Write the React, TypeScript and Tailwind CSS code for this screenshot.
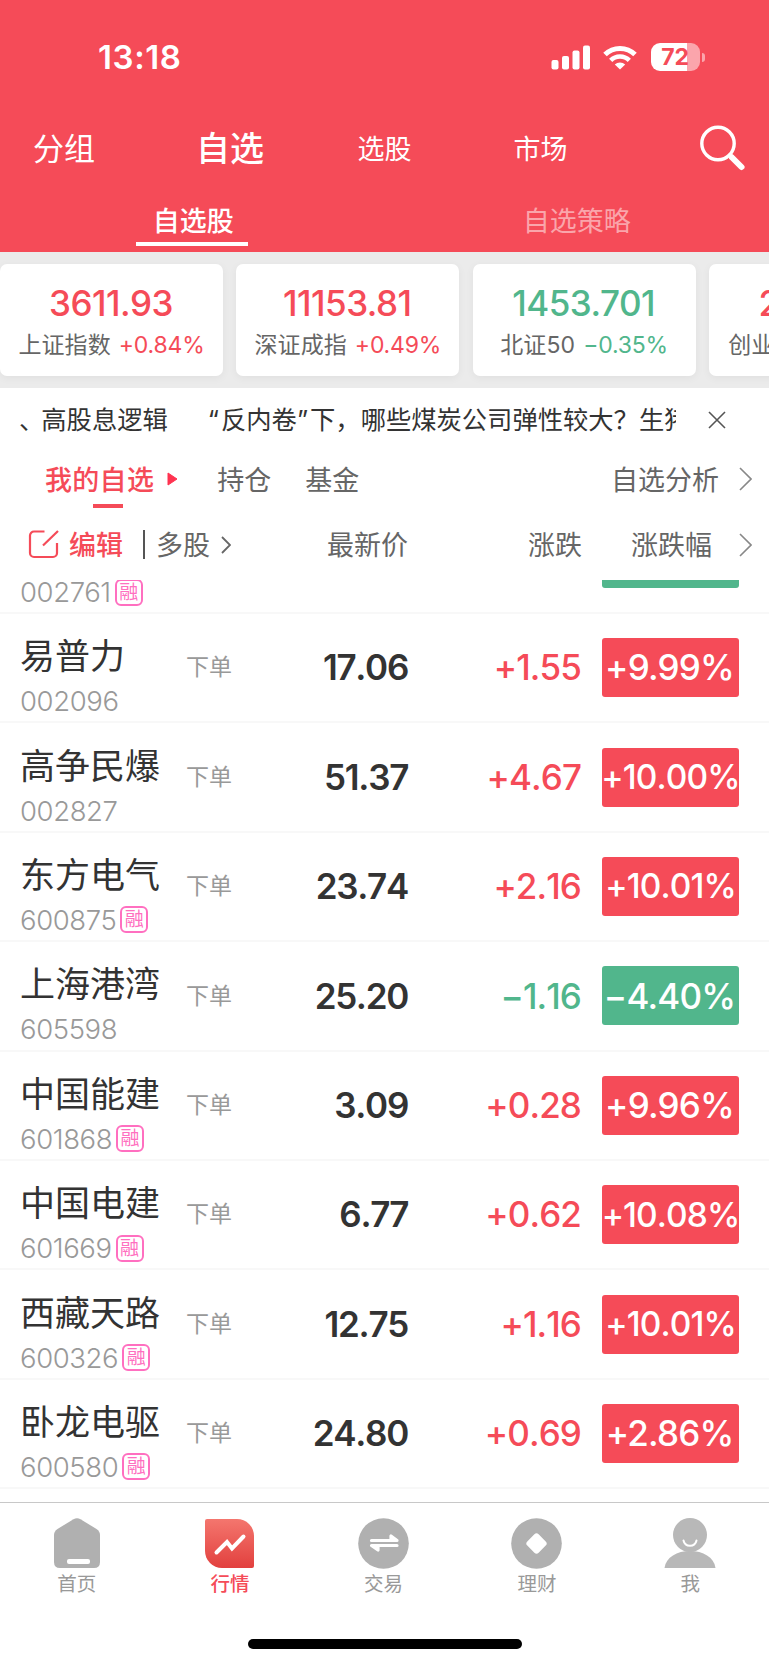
import type { ReactNode } from "react";
import clsx from "clsx";

type Quote = {
  name: string;
  code: string;
  margin?: boolean;
  price: string;
  change: string;
  percent: string;
};

type IndexQuote = {
  value: string;
  name: string;
  percent: string;
  up: boolean;
};

const INDEXES: IndexQuote[] = [
  { value: "3611.93", name: "上证指数", percent: "+0.84%", up: true },
  { value: "11153.81", name: "深证成指", percent: "+0.49%", up: true },
  { value: "1453.701", name: "北证50", percent: "−0.35%", up: false },
  { value: "2181.63", name: "创业板指", percent: "+0.87%", up: true },
];

const QUOTES: Quote[] = [
  { name: "易普力", code: "002096", price: "17.06", change: "+1.55", percent: "+9.99%" },
  { name: "高争民爆", code: "002827", price: "51.37", change: "+4.67", percent: "+10.00%" },
  { name: "东方电气", code: "600875", margin: true, price: "23.74", change: "+2.16", percent: "+10.01%" },
  { name: "上海港湾", code: "605598", price: "25.20", change: "−1.16", percent: "−4.40%" },
  { name: "中国能建", code: "601868", margin: true, price: "3.09", change: "+0.28", percent: "+9.96%" },
  { name: "中国电建", code: "601669", margin: true, price: "6.77", change: "+0.62", percent: "+10.08%" },
  { name: "西藏天路", code: "600326", margin: true, price: "12.75", change: "+1.16", percent: "+10.01%" },
  { name: "卧龙电驱", code: "600580", margin: true, price: "24.80", change: "+0.69", percent: "+2.86%" },
];

function StatusBar() {
  return (
    <div className="flex h-[114px] items-center pr-[64px] pl-[98px]">
      <span className="pt-[2px] text-[33px] font-semibold tracking-[0.6px]">13:18</span>
      <svg className="ml-auto" width="39" height="26" viewBox="0 0 39 26" fill="currentColor">
        <rect x="0.5" y="16" width="7" height="9.5" rx="2" />
        <rect x="11" y="12" width="7" height="13.5" rx="2" />
        <rect x="21.5" y="6.5" width="7" height="19" rx="2" />
        <rect x="32" y="1.5" width="7" height="24" rx="2" />
      </svg>
      <svg className="ml-[13px]" width="34" height="26" viewBox="0 0 34 26" fill="none" stroke="currentColor">
        <path d="M2 10.6a21.3 21.3 0 0 1 30 0" strokeWidth="5" />
        <path d="M7.7 16.3a13.2 13.2 0 0 1 18.6 0" strokeWidth="4.6" />
        <path d="M11.8 20.6a7.6 7.6 0 0 1 10.4 0L17 25.6z" fill="currentColor" stroke="none" />
      </svg>
      <div className="ml-[14px] flex h-[28px] w-[49px] overflow-hidden rounded-[9px] bg-[linear-gradient(to_right,#fff_36px,#fba5ac_36px)]">
        <span className="w-full pr-[1px] text-center text-[23px] leading-[28px] font-bold tracking-[-0.2px] text-[#f54b58]">72</span>
      </div>
      <span className="ml-[2px] h-[9px] w-[3px] rounded-r-full bg-[#fba5ac]" />
    </div>
  );
}

function Header() {
  return (
    <header className="h-[252px] bg-[#f54b58] text-white">
      <StatusBar />
      <div className="flex h-[68px] items-center whitespace-nowrap">
        <span className="w-[128px] pt-[3px] text-center text-[31px]">分组</span>
        <span className="w-[205px] pt-[1px] pr-[1px] text-center text-[34px] font-medium">自选</span>
        <span className="w-[104px] pt-[4px] pr-[1px] text-center text-[27px]">选股</span>
        <span className="w-[208px] pt-[4px] pr-[1px] text-center text-[27px]">市场</span>
        <svg className="mt-[-1px] ml-[53px]" width="50" height="50" viewBox="0 0 50 50" fill="none" stroke="currentColor" strokeLinecap="round">
          <circle cx="20" cy="20.500" r="16.2" strokeWidth="3.4" />
          <path d="M32 32l2.5 2.5" strokeWidth="4" />
          <path d="M34 34.500l9.500 9.500" strokeWidth="6" />
        </svg>
      </div>
      <div className="flex h-[70px] text-[27px]">
        <div className="flex flex-1 flex-col items-center">
          <span className="h-[60px] pl-[2px] leading-[80px] font-medium">自选股</span>
          <span className="h-[4px] w-[112px] bg-white" />
        </div>
        <div className="flex-1 text-center leading-[80px] text-[#faa5ab]">自选策略</div>
      </div>
    </header>
  );
}

function IndexStrip() {
  return (
    <section className="flex h-[136px] gap-[13.3px] overflow-hidden bg-[#ebebeb] pt-[12px]">
      {INDEXES.map((item) => (
        <div
          key={item.name}
          className={clsx(
            "flex h-[111.5px] w-[223px] shrink-0 flex-col items-center rounded-[7px] bg-white whitespace-nowrap shadow-[0_2px_8px_rgba(0,0,0,0.05)]",
            item.up ? "text-[#f54b58]" : "text-[#51b68c]",
          )}
        >
          <span className="mt-[18px] pr-[1px] text-[35px] leading-[42px] font-medium tracking-[-0.5px]">{item.value}</span>
          <span className="mt-[3px] flex gap-[8px] text-[23px] leading-[37px]">
            <span className="tracking-[0.1px] text-[#666]">{item.name}</span>
            <span className="tracking-[-0.2px]">{item.percent}</span>
          </span>
        </div>
      ))}
    </section>
  );
}

function NewsTicker() {
  return (
    <div className="flex h-[64px] items-center">
      <div className="ml-[16px] flex w-[660px] gap-[40px] overflow-hidden text-[25.3px] whitespace-nowrap text-[#333]">
        <span>
          <span className="mr-[-3px] ml-[3px]">、</span>高股息逻辑
        </span>
        <span>
          <span className="tracking-[2px]">“</span>反内卷<span className="tracking-[2px]">”</span>
          下，哪些煤炭公司弹性较大？生猪
        </span>
      </div>
      <svg className="ml-[32px]" width="18" height="18" viewBox="0 0 18 18" fill="none" stroke="#555" strokeWidth="1.6">
        <path d="M1 1l16 16M17 1L1 17" />
      </svg>
    </div>
  );
}

function Chevron() {
  return (
    <svg width="13" height="24" viewBox="0 0 13 24" fill="none" stroke="#888" strokeWidth="1.6">
      <path d="M1 1l11 11L1 23" />
    </svg>
  );
}

function GroupTabs() {
  return (
    <div className="flex h-[57px] items-start pr-[17px] pl-[45px] text-[27px] leading-[58px] whitespace-nowrap text-[#666]">
      <div className="flex flex-col items-center text-[#f54b58]">
        <span className="h-[52px] font-medium tracking-[0.3px]">我的自选</span>
        <span className="ml-[16px] h-[4px] w-[30px] bg-[#f54b58]" />
      </div>
      <svg className="mt-[20px] ml-[13px]" width="11" height="14" viewBox="0 0 11 14" fill="#ff3350">
        <path d="M1 1l9 6-9 6z" stroke="#ff3350" strokeLinejoin="round" />
      </svg>
      <span className="ml-[39px]">持仓</span>
      <span className="ml-[34px]">基金</span>
      <span className="ml-auto">自选分析</span>
      <span className="mt-[15px] ml-[20px] flex">
        <Chevron />
      </span>
    </div>
  );
}

function TableHead() {
  return (
    <div className="flex h-[71px] items-center pr-[17px] pl-[28px] text-[27px] whitespace-nowrap text-[#666]">
      <svg className="mt-[-2px]" width="31" height="30" viewBox="0 0 31 30" fill="none" stroke="#f54b58" strokeWidth="2.2">
        <path d="M16.5 2.5H6a4 4 0 0 0-4 4V24a4 4 0 0 0 4 4h19a4 4 0 0 0 4-4V14" />
        <path d="M15 16.5L30 2" />
      </svg>
      <span className="ml-[10px] pt-[3px] font-medium text-[#f54b58]">编辑</span>
      <span className="ml-[20px] h-[29px] w-[2px] bg-[#555]" />
      <span className="ml-[11px] pt-[3px]">多股</span>
      <svg className="ml-[11px]" width="10" height="18" viewBox="0 0 10 18" fill="none" stroke="#666" strokeWidth="1.8">
        <path d="M1 1l8 8-8 8" />
      </svg>
      <span className="ml-auto w-[100px] pt-[3px] text-right">最新价</span>
      <span className="w-[174px] pt-[3px] text-right">涨跌</span>
      <span className="w-[130px] pt-[3px] text-right">涨跌幅</span>
      <span className="ml-[27px]">
        <Chevron />
      </span>
    </div>
  );
}

function StockCode({ code, margin }: { code: string; margin?: boolean }) {
  return (
    <div className="flex h-[26px] items-center gap-[4px] text-[#999]">
      <span className="text-[27.5px] leading-[26px] font-light tracking-[-0.4px]">{code}</span>
      {margin ? (
        <span className="flex h-[27px] w-[28px] items-center justify-center rounded-[6px] border-2 border-[#ff6fc0] text-[19px] leading-none text-[#ff6fc0]">
          融
        </span>
      ) : null}
    </div>
  );
}

function QuoteRow({ quote }: { quote: Quote }) {
  const up = quote.change.startsWith("+");
  // seven characters no longer fit the pill at full size
  const long = quote.percent.length > 6;

  return (
    <div className="flex h-[109.4px] items-center border-b-2 border-[#f8f8f8] pr-[30px] pl-[20px] whitespace-nowrap">
      <div className="w-[166px] pt-[11px]">
        <div className="text-[35px] leading-[48px] text-[#333]">{quote.name}</div>
        <div className="mt-[8px]">
          <StockCode code={quote.code} margin={quote.margin} />
        </div>
      </div>
      <span className="text-[23px] text-[#999]">下单</span>
      <span className="ml-auto pr-[1px] text-[35px] font-semibold tracking-[-1.3px] text-[#333] [font-kerning:none]">{quote.price}</span>
      <span
        className={clsx(
          "w-[173px] pr-[1px] text-right text-[35px] font-medium tracking-[-0.9px] [font-kerning:none]",
          up ? "text-[#f54b58]" : "text-[#51b68c]",
        )}
      >
        {quote.change}
      </span>
      <span
        className={clsx(
          "ml-[20px] flex h-[59px] w-[137px] items-center justify-center rounded-[3px] font-medium text-white",
          long ? "text-[33.5px] tracking-[-0.9px] [font-kerning:none]" : "pr-[2px] text-[35px] tracking-[-0.8px]",
          up ? "bg-[#f54b58]" : "bg-[#51b68c]",
        )}
      >
        {quote.percent}
      </span>
    </div>
  );
}

function NavItem({ label, active, children }: { label: string; active?: boolean; children: ReactNode }) {
  return (
    <div className={clsx("flex flex-1 flex-col items-center", active ? "text-[#f54b58]" : "text-[#999]")}>
      <svg width="52" height="52" viewBox="0 0 52 52" fill="none">
        {children}
      </svg>
      <span className={clsx("text-[19.5px] leading-[30px]", active && "font-medium")}>{label}</span>
    </div>
  );
}

function BottomNav() {
  return (
    <nav className="flex h-[121px] border-t border-[#c8c8c8] pt-[14px] pr-[2px]">
      <NavItem label="首页">
        <path d="M22.5 2.2Q26 .2 29.500 2.200L45.500 12Q49 14.500 49 18V45Q49 51 43 51H9Q3 51 3 45V18Q3 14.500 6.500 12Z" fill="#b0b0b0" />
        <rect x="16" y="42" width="23" height="5" rx="2" fill="#fff" />
      </NavItem>
      <NavItem label="行情" active>
        <defs>
          <linearGradient id="nav-active" x1="0" y1="0" x2="0" y2="1">
            <stop stopColor="#f4766e" />
            <stop offset="1" stopColor="#e2403e" />
          </linearGradient>
        </defs>
        <path d="M3 2H33A17 17 0 0 1 50 19V49Q50 51 48 51H18A17 17 0 0 1 1 34V4Q1 2 3 2Z" fill="url(#nav-active)" />
        <path d="M12.500 35.500L23 25L28 31.500L39.500 19.500" stroke="#fff" strokeWidth="4" strokeLinecap="round" />
      </NavItem>
      <NavItem label="交易">
        <circle cx="25.500" cy="26.500" r="25.300" fill="#b0b0b0" />
        <path d="M13.500 23.500H39L33 19V22M39 28.500H13.500L20 33V30" stroke="#fff" strokeWidth="3.200" strokeLinecap="round" strokeLinejoin="round" />
      </NavItem>
      <NavItem label="理财">
        <circle cx="25.500" cy="26.500" r="25.300" fill="#b0b0b0" />
        <rect x="17.500" y="18.500" width="16" height="16" rx="3" fill="#fff" transform="rotate(45 25.500 26.500)" />
      </NavItem>
      <NavItem label="我">
        <circle cx="26" cy="18" r="17" fill="#b8b8b8" />
        <path d="M0.500 51C2 40 13 34 26 34S50 40 51.500 51Z" fill="#b8b8b8" />
        <path d="M19.500 23.500C21 30.500 31 30.500 32.500 23.500" stroke="#fff" strokeWidth="2" strokeLinecap="round" />
      </NavItem>
    </nav>
  );
}

export default function App() {
  return (
    <div className="flex h-[1665px] w-[769px] flex-col overflow-hidden bg-white font-['Inter','Noto_Sans_CJK_SC',sans-serif]">
      <Header />
      <IndexStrip />
      <NewsTicker />
      <GroupTabs />
      <TableHead />
      <main className="h-[922px] shrink-0 overflow-hidden">
        <div className="flex h-[34px] items-start justify-between border-b-2 border-[#f8f8f8] pr-[30px] pl-[20px]">
          <div className="mt-[-1px]">
            <StockCode code="002761" margin />
          </div>
          <span className="h-[8px] w-[137px] rounded-b-[3px] bg-[#51b68c]" />
        </div>
        {QUOTES.map((quote) => (
          <QuoteRow key={quote.code} quote={quote} />
        ))}
      </main>
      <BottomNav />
      <div className="mx-auto mt-[16px] h-[10px] w-[274px] shrink-0 rounded-full bg-black" />
    </div>
  );
}
